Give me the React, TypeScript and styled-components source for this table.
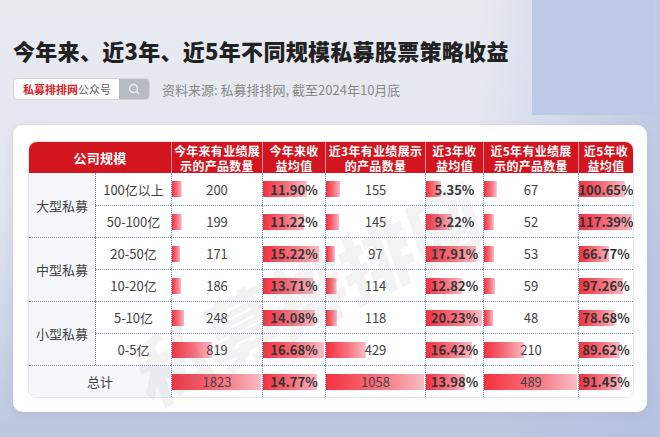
import React from "react";
import styled, { createGlobalStyle } from "styled-components";
import { Search } from "lucide-react";

const GlobalStyle = createGlobalStyle`
  html, body { margin: 0; padding: 0; }
  body { font-family: "Noto Sans CJK SC", "Noto Sans", sans-serif; }
`;

// 数据
type Row = { group?: string; size: string; v: number[] };

const rows: Row[] = [
  { group: "大型私募", size: "100亿以上", v: [200, 11.9, 155, 5.35, 67, 100.65] },
  { size: "50-100亿", v: [199, 11.22, 145, 9.22, 52, 117.39] },
  { group: "中型私募", size: "20-50亿", v: [171, 15.22, 97, 17.91, 53, 66.77] },
  { size: "10-20亿", v: [186, 13.71, 114, 12.82, 59, 97.26] },
  { group: "小型私募", size: "5-10亿", v: [248, 14.08, 118, 20.23, 48, 78.68] },
  { size: "0-5亿", v: [819, 16.68, 429, 16.42, 210, 89.62] },
];
const total = [1823, 14.77, 1058, 13.98, 489, 91.45];

const heads = [
  ["今年来有业绩展", "示的产品数量"],
  ["今年来收", "益均值"],
  ["近3年有业绩展示", "的产品数量"],
  ["近3年收", "益均值"],
  ["近5年有业绩展", "示的产品数量"],
  ["近5年收", "益均值"],
];

const maxes = [0, 1, 2, 3, 4, 5].map((i) =>
  Math.max(total[i], ...rows.map((r) => r.v[i]))
);

const Page = styled.div`
  position: relative;
  width: 660px;
  height: 437px;
  overflow: hidden;
  box-sizing: border-box;
  padding: 36px 13px 0;
  background:
    linear-gradient(90deg, rgba(180, 194, 224, 0) 72%, rgba(178, 192, 224, 0.75) 100%),
    linear-gradient(180deg, #e9ebf1 0%, #e1e5ee 45%, #bcc7df 100%);

  &::before {
    content: "";
    position: absolute;
    top: 0;
    right: 5px;
    width: 123px;
    height: 115px;
    background: #bdc9e5;
  }
`;

const Title = styled.h1`
  position: relative;
  margin: 0;
  font-size: 22px;
  line-height: 28px;
  font-weight: 900;
  letter-spacing: 0.3px;
  color: #222;
`;

const SearchRow = styled.div`
  display: flex;
  align-items: center;
  gap: 12px;
  margin-top: 14px;
  height: 22px;
`;

const SearchBox = styled.div`
  display: flex;
  width: 137px;
  height: 22px;
  box-sizing: border-box;
  border: 1px solid #d3d6dd;
  border-radius: 4px;
  overflow: hidden;
  background: #fff;
`;

const SearchText = styled.div`
  flex: 1;
  padding-left: 9px;
  font-size: 11px;
  line-height: 20px;
  color: #666;

  b {
    color: #d71f2b;
    font-weight: 700;
  }
`;

const SearchButton = styled.div`
  width: 30px;
  display: flex;
  align-items: center;
  justify-content: center;
  background: #b7bbc4;
  color: #eef0f4;
`;

const Source = styled.span`
  font-size: 13px;
  color: #888;
`;

const Card = styled.div`
  position: relative;
  margin-top: 25px;
  padding: 17px 14px 15px 16px;
  background: #fff;
  border-radius: 10px;
  box-shadow: 0 2px 8px rgba(90, 100, 140, 0.12);
`;

const Table = styled.div`
  display: grid;
  grid-template-columns: 66px 76px 91px 63px 100px 58px 95px 55px;
  grid-template-rows: 31px repeat(7, 32px);
  border-radius: 8px;
  overflow: hidden;
  box-shadow: 0 0 0 1px #e4e7ee;
`;

const Head = styled.div<{ $span?: number; $first?: boolean }>`
  grid-column: span ${(p) => p.$span ?? 1};
  display: flex;
  align-items: center;
  justify-content: center;
  text-align: center;
  background: #d3151f;
  color: #fff;
  font-size: ${(p) => (p.$first ? "13px" : "12px")};
  font-weight: 700;
  line-height: 15px;
  letter-spacing: 0.3px;
  border-left: ${(p) => (p.$first ? "none" : "1px solid rgba(255,255,255,0.55)")};
`;

const Cell = styled.div<{
  $top?: boolean;
  $left?: boolean;
  $rows?: number;
  $cols?: number;
  $shade?: boolean;
  $bold?: boolean;
}>`
  grid-row: span ${(p) => p.$rows ?? 1};
  grid-column: span ${(p) => p.$cols ?? 1};
  display: flex;
  align-items: center;
  justify-content: center;
  font-size: 13px;
  font-weight: ${(p) => (p.$bold ? 700 : 400)};
  color: ${(p) => (p.$bold ? "#333" : "#444")};
  background-color: ${(p) => (p.$shade ? "#f5f7fb" : "#fff")};
  border-top: ${(p) => (p.$top ? "1px dotted #8392b0" : "none")};
  border-left: ${(p) => (p.$left ? "1px dotted #8392b0" : "none")};
`;

const BarCell = styled(Cell)`
  background-image: linear-gradient(90deg, #f3313f 0%, #f6727e 55%, #f8bcc5 100%);
  background-repeat: no-repeat;
  background-position: left center;
`;

const Watermark = styled.div`
  position: absolute;
  left: 138px;
  top: 212px;
  line-height: 76px;
  font-size: 76px;
  font-weight: 900;
  white-space: nowrap;
  color: rgba(120, 120, 130, 0.09);
  transform: rotate(-27deg) skewX(-8deg);
  transform-origin: left bottom;
  pointer-events: none;
`;

const fmt = (n: number, i: number) => (i % 2 === 1 ? `${n.toFixed(2)}%` : `${n}`);

const Values: React.FC<{ v: number[]; top: boolean }> = ({ v, top }) => (
  <>
    {v.map((n, i) => (
      <BarCell
        key={i}
        $top={top}
        $left
        $bold={i % 2 === 1}
        style={{ backgroundSize: `${(n / maxes[i]) * 99}% 16px` }}
      >
        {fmt(n, i)}
      </BarCell>
    ))}
  </>
);

const App: React.FC = () => {
  return (
    <Page>
      <GlobalStyle />
      <Title>今年来、近3年、近5年不同规模私募股票策略收益</Title>
      <SearchRow>
        <SearchBox>
          <SearchText>
            <b>私募排排网</b>公众号
          </SearchText>
          <SearchButton>
            <Search size={12} strokeWidth={2.6} />
          </SearchButton>
        </SearchBox>
        <Source>资料来源: 私募排排网, 截至2024年10月底</Source>
      </SearchRow>
      <Card>
        <Table>
          <Head $span={2} $first>
            公司规模
          </Head>
          {heads.map((h, i) => (
            <Head key={i}>
              {h[0]}
              <br />
              {h[1]}
            </Head>
          ))}
          {rows.map((r, ri) => (
            <React.Fragment key={ri}>
              {r.group && (
                <Cell $rows={2} $shade $top={ri > 0}>
                  {r.group}
                </Cell>
              )}
              <Cell $left $top={ri > 0}>
                {r.size}
              </Cell>
              <Values v={r.v} top={ri > 0} />
            </React.Fragment>
          ))}
          <Cell $cols={2} $shade $top>
            总计
          </Cell>
          <Values v={total} top />
        </Table>
        <Watermark>私募排排网</Watermark>
      </Card>
    </Page>
  );
};

export default App;
